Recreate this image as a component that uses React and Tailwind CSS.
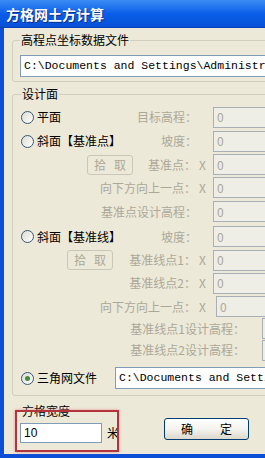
import React from "react";

const cjk = "font-['SimSun','Noto_Sans_CJK_SC',sans-serif]";
const mono = "font-['Liberation_Mono','Noto_Sans_CJK_SC',monospace]";

function Radio({ checked }) {
    return (
        <span className="w-[13px] h-[13px] rounded-full border border-[#3b5670] bg-gradient-to-br from-[#dcdbd3] to-white flex items-center justify-center shrink-0">
            {checked && <span className="w-[5px] h-[5px] rounded-full bg-[#3f8f3f]" />}
        </span>
    );
}

function PickButton({ className }) {
    return (
        <div className={`h-[20px] w-[46px] rounded-[3px] border border-[#c9c7ba] flex items-center justify-between px-[6px] text-[#aca899] ${className}`}>
            <span>拾</span>
            <span>取</span>
        </div>
    );
}

function Row({ h, left, label, xMark, w, gap, inputW = "w-[80px]" }) {
    return (
        <div className={`flex items-center ${h}`}>
            <div className={`flex items-center shrink-0 ${w}`}>
                <div className="flex-1 flex items-center">{left}</div>
                <span className="text-[#aca899] whitespace-nowrap">{label}</span>
                {xMark && <span className="text-[#aca899] w-[10px] text-right">X</span>}
            </div>
            <div className={`h-[21px] shrink-0 border border-[#a7afb7] bg-[#eeede6] text-[#aca899] pl-[3px] flex items-center ${gap} ${inputW}`}>
                0
            </div>
        </div>
    );
}

function RadioLabel({ checked, children }) {
    return (
        <div className="flex items-center gap-[3px] text-black">
            <Radio checked={checked} />
            <span className="whitespace-nowrap">{children}</span>
        </div>
    );
}

export default function App() {
    return (
        <div className={`w-[265px] h-[458px] overflow-hidden bg-[#0b4fd6] flex flex-col text-[12px] leading-[16px] ${cjk}`}>
            {/* title bar */}
            <div className="h-[28px] shrink-0 flex items-center pl-[6px] bg-gradient-to-b from-[#3b8cf5] via-[#0a5ee8] to-[#0851d8] border-b border-[#0a3fb8]">
                <span className="text-white font-bold text-[14px] [text-shadow:1px_1px_0_#0a2f8a]">方格网土方计算</span>
            </div>

            <div className="relative flex-1 ml-[4px] mb-[4px] bg-[#ece9d8] pt-[4px]">
                <fieldset className="ml-[8px] w-[300px] border border-[#d0d0bf] rounded-[3px] pl-[7px] pt-[7px] pb-[4px]">
                    <legend className="px-[1px] text-black leading-[16px]">高程点坐标数据文件</legend>
                    <div className={`h-[22px] border border-[#7f9db9] bg-white flex items-center pl-[3px] text-[11.5px] text-black whitespace-nowrap ${mono}`}>
                        C:\Documents and Settings\Administrator\My Documents
                    </div>
                </fieldset>

                <fieldset className="mt-[4px] ml-[8px] w-[300px] border border-[#d0d0bf] rounded-[3px] pl-[8px] pt-[3px] pb-0">
                    <legend className="px-[1px] text-black leading-[16px]">设计面</legend>
                    <Row h="h-[24px]" w="w-[176px]" gap="ml-[16px]" label="目标高程：" left={<RadioLabel>平面</RadioLabel>} />
                    <Row h="h-[24px]" w="w-[176px]" gap="ml-[16px]" label="坡度：" left={<RadioLabel>斜面【基准点】</RadioLabel>} />
                    <Row h="h-[23px]" w="w-[185px]" gap="ml-[7px]" label="基准点：" xMark left={<PickButton className="ml-[66px]" />} />
                    <Row h="h-[23px]" w="w-[185px]" gap="ml-[7px]" label="向下方向上一点：" xMark />
                    <Row h="h-[25px]" w="w-[176px]" gap="ml-[16px]" label="基准点设计高程：" />
                    <Row h="h-[25px]" w="w-[176px]" gap="ml-[16px]" label="坡度：" left={<RadioLabel>斜面【基准线】</RadioLabel>} />
                    <Row h="h-[22px]" w="w-[185px]" gap="ml-[7px]" label="基准线点1：" xMark left={<PickButton className="ml-[46px]" />} />
                    <Row h="h-[24px]" w="w-[185px]" gap="ml-[7px]" label="基准线点2：" xMark />
                    <Row h="h-[23px]" w="w-[185px]" gap="ml-[10px]" label="向下方向上一点：" xMark />
                    <Row h="h-[21px]" w="w-[224px]" gap="ml-[17px]" label="基准线点1设计高程：" />
                    <Row h="h-[22px]" w="w-[224px]" gap="ml-[17px]" label="基准线点2设计高程：" />
                    <div className="flex items-center h-[34px]">
                        <div className="w-[94px] shrink-0">
                            <RadioLabel checked>三角网文件</RadioLabel>
                        </div>
                        <div className={`h-[22px] w-[200px] shrink-0 border border-[#7f9db9] bg-white flex items-center pl-[3px] text-[11.5px] text-black whitespace-nowrap ${mono}`}>
                            C:\Documents and Settings\Administrator
                        </div>
                    </div>
                </fieldset>

                <div className="flex items-start mt-[7px] ml-[16px]">
                    <div className="flex flex-col">
                        <span className="pl-[2px] text-black">方格宽度</span>
                        <div className="flex items-center mt-[4px]">
                            <div className="h-[20px] w-[82px] border border-[#7f9db9] bg-white flex items-center pl-[3px] text-[12px] text-black font-['Liberation_Sans',sans-serif]">10</div>
                            <span className="ml-[5px] text-black">米</span>
                        </div>
                    </div>
                    <div className="ml-[45px] mt-[15px] h-[22px] w-[85px] rounded-[3px] border border-[#003c74] bg-gradient-to-b from-white via-[#f4f3ee] to-[#dcd9cc] flex items-center justify-between px-[16px] text-black">
                        <span>确</span>
                        <span>定</span>
                    </div>
                </div>

                {/* red annotation */}
                <div className="absolute left-[11px] top-[382px] w-[104px] h-[42px] border-2 border-[#b3343c] shadow-[0_0_3px_#e39a9a]" />
            </div>
        </div>
    );
}
